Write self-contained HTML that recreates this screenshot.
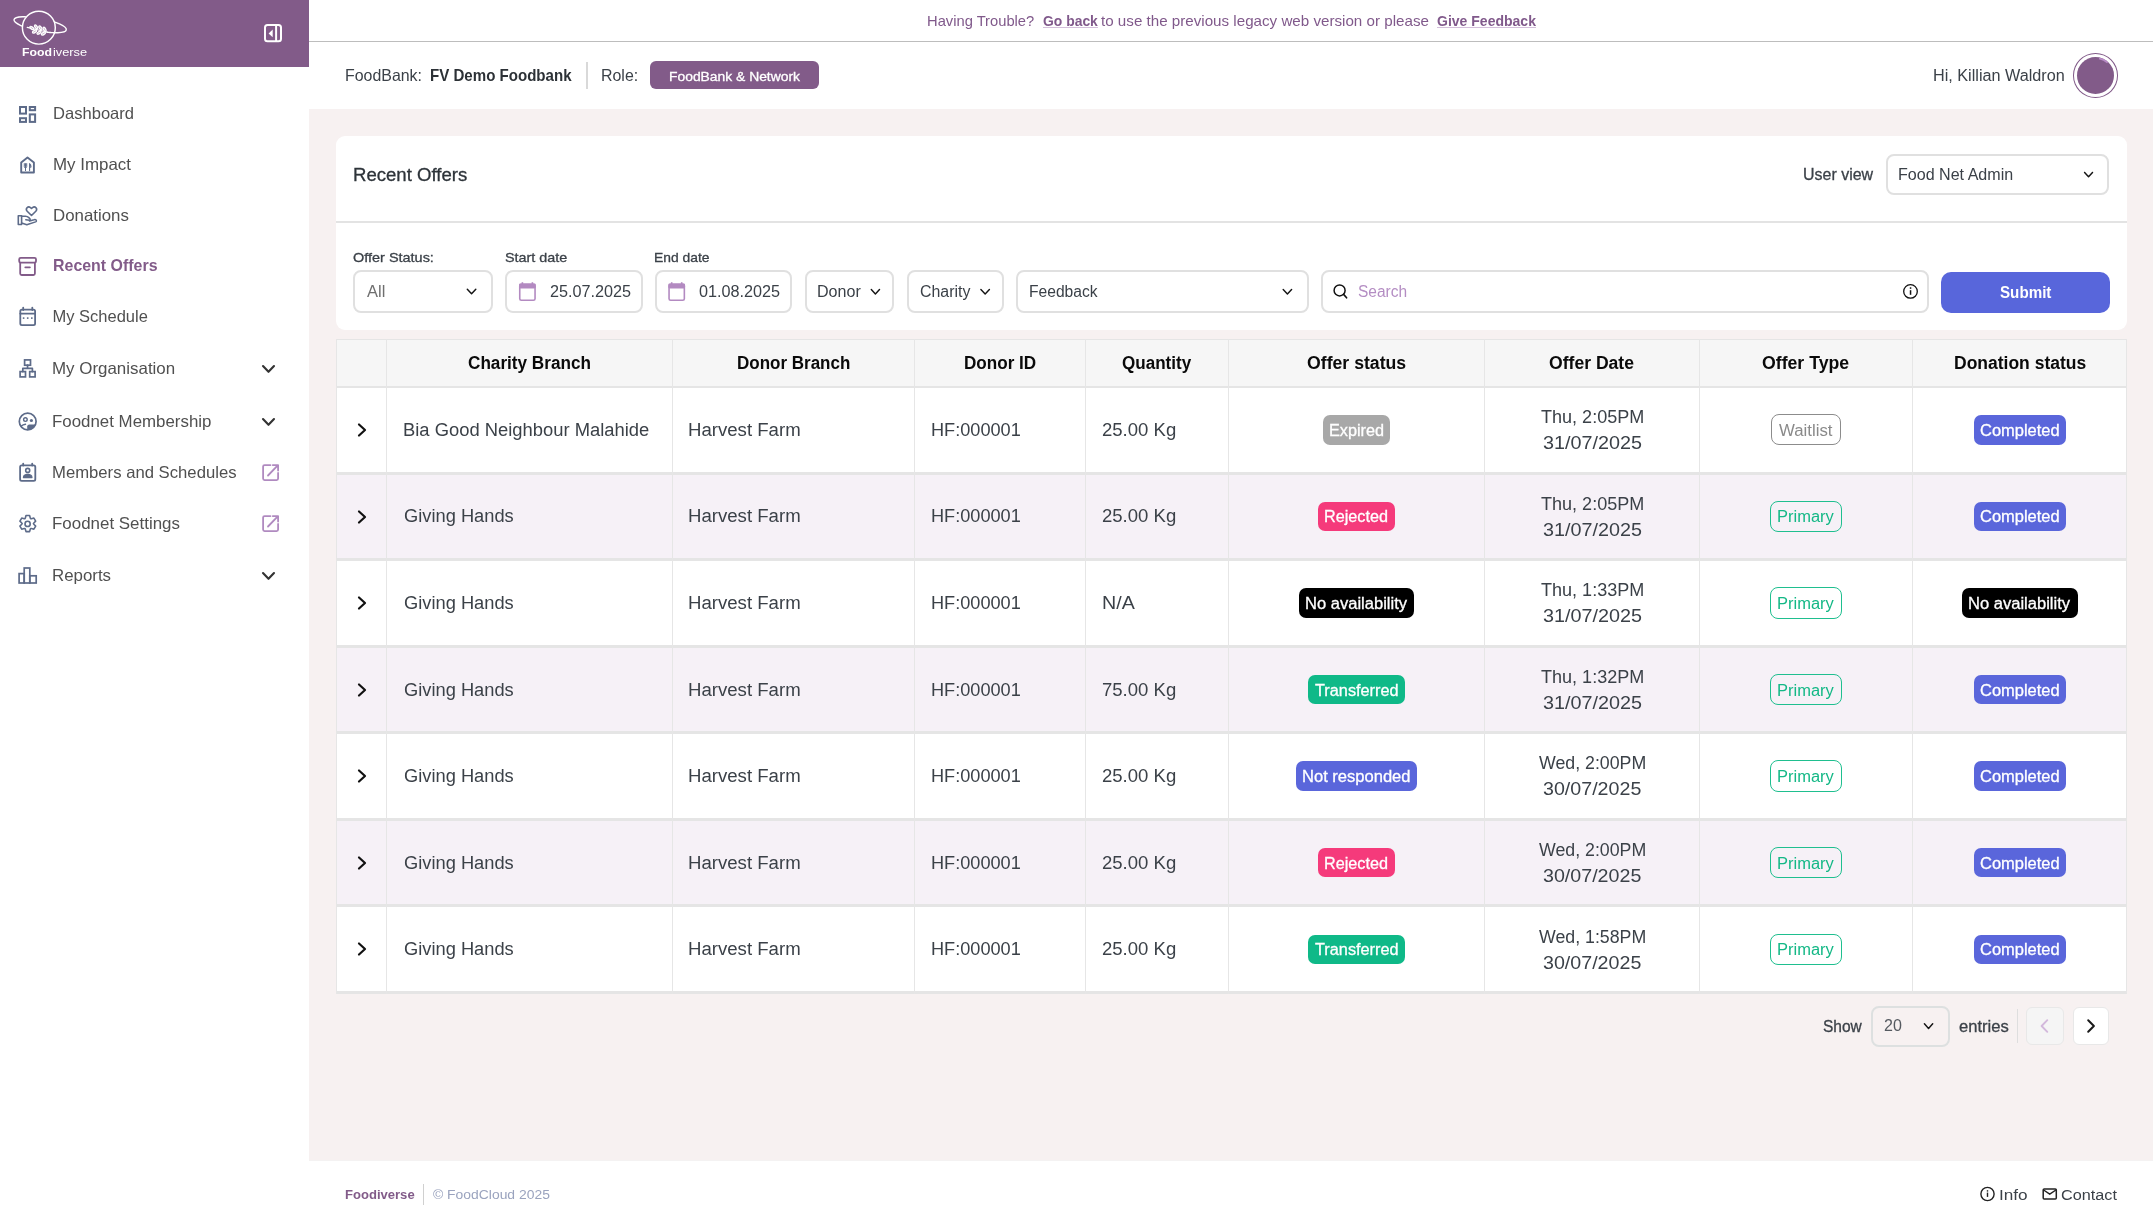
<!DOCTYPE html>
<html><head><meta charset="utf-8"><title>Recent Offers</title>
<style>
html,body{margin:0;padding:0;width:2153px;height:1226px;overflow:hidden;background:#fff;}
body{position:relative;font-family:"Liberation Sans",sans-serif;}
.b{position:absolute;}
.i{position:absolute;overflow:visible;}
.tl{position:absolute;left:0;top:0;width:2153px;height:1226px;will-change:transform;}
.t{position:absolute;white-space:nowrap;line-height:1;transform-origin:0 0;}
</style></head><body>
<div class="b" style="left:309px;top:109px;width:1844px;height:1051px;background:#f7f1f1;"></div>
<div class="b" style="left:309px;top:41px;width:1844px;height:1px;background:#bdbdbd;"></div>
<div class="b" style="left:0px;top:0px;width:309px;height:67.4px;background:#825b89;"></div>
<div class="b" style="left:1043px;top:26.5px;width:55px;height:1px;background:#d4bfdb;"></div>
<div class="b" style="left:1437px;top:26.5px;width:99px;height:1px;background:#d4bfdb;"></div>
<div class="b" style="left:586px;top:62px;width:2px;height:27px;background:#d9d9d9;"></div>
<div class="b" style="left:650.3px;top:61.4px;width:168.8px;height:28px;background:#825b89;border-radius:6px;"></div>
<div class="b" style="left:2073.2px;top:53.1px;width:44.8px;height:44.6px;border:1.2px solid #825b89;border-radius:50%;box-sizing:border-box;"></div>
<div class="b" style="left:2076.6px;top:56.5px;width:37.7px;height:37.5px;background:#825b89;border-radius:50%;"></div>
<svg class="i" style="left:2060px;top:40px" width="70" height="70" viewBox="2060 40 70 70" fill="none"><path d="M2099.0 58.3 A17.4 17.4 0 0 1 2107.6 62.6" stroke="#b88ac6" stroke-width="1.7"/></svg>
<div class="b" style="left:336px;top:136px;width:1791px;height:194px;background:#fff;border-radius:9px;"></div>
<div class="b" style="left:336px;top:221px;width:1791px;height:2px;background:#e3e3e3;"></div>
<div class="b" style="left:1885.7px;top:153.8px;width:223.5px;height:40.9px;border:2px solid #e0e0e0;border-radius:8px;box-sizing:border-box;background:#fff;"></div>
<div class="b" style="left:353.3px;top:270.2px;width:139.7px;height:42.5px;border:2px solid #e0e0e0;border-radius:8px;box-sizing:border-box;background:#fff;"></div>
<div class="b" style="left:505.2px;top:270.2px;width:137.5px;height:42.5px;border:2px solid #e0e0e0;border-radius:8px;box-sizing:border-box;background:#fff;"></div>
<div class="b" style="left:654.8px;top:270.2px;width:137.5px;height:42.5px;border:2px solid #e0e0e0;border-radius:8px;box-sizing:border-box;background:#fff;"></div>
<div class="b" style="left:804.5px;top:270.2px;width:89.9px;height:42.5px;border:2px solid #e0e0e0;border-radius:8px;box-sizing:border-box;background:#fff;"></div>
<div class="b" style="left:906.7px;top:270.2px;width:97.3px;height:42.5px;border:2px solid #e0e0e0;border-radius:8px;box-sizing:border-box;background:#fff;"></div>
<div class="b" style="left:1016.3px;top:270.2px;width:292.3px;height:42.5px;border:2px solid #e0e0e0;border-radius:8px;box-sizing:border-box;background:#fff;"></div>
<div class="b" style="left:1321.2px;top:270.2px;width:608.3px;height:42.5px;border:2px solid #e0e0e0;border-radius:8px;box-sizing:border-box;background:#fff;"></div>
<div class="b" style="left:1941.2px;top:272.3px;width:168.6px;height:40.6px;background:#5866db;border-radius:10px;"></div>
<div class="b" style="left:336px;top:339px;width:1791px;height:655px;background:#fff;"></div>
<div class="b" style="left:336px;top:339px;width:1791px;height:49px;background:#f6f6f6;"></div>
<div class="b" style="left:336px;top:471.57px;width:1791px;height:3px;background:#e5e5e5;"></div>
<div class="b" style="left:336px;top:474.57px;width:1791px;height:86.57px;background:#f6f1f7;"></div>
<div class="b" style="left:336px;top:558.14px;width:1791px;height:3px;background:#e5e5e5;"></div>
<div class="b" style="left:336px;top:644.71px;width:1791px;height:3px;background:#e5e5e5;"></div>
<div class="b" style="left:336px;top:647.71px;width:1791px;height:86.57px;background:#f6f1f7;"></div>
<div class="b" style="left:336px;top:731.29px;width:1791px;height:3px;background:#e5e5e5;"></div>
<div class="b" style="left:336px;top:817.86px;width:1791px;height:3px;background:#e5e5e5;"></div>
<div class="b" style="left:336px;top:820.86px;width:1791px;height:86.57px;background:#f6f1f7;"></div>
<div class="b" style="left:336px;top:904.43px;width:1791px;height:3px;background:#e5e5e5;"></div>
<div class="b" style="left:336px;top:991px;width:1791px;height:3px;background:#e5e5e5;"></div>
<div class="b" style="left:336px;top:386px;width:1791px;height:2px;background:#e5e5e5;"></div>
<div class="b" style="left:336px;top:339px;width:1791px;height:1px;background:#e5e5e5;"></div>
<div class="b" style="left:336px;top:339px;width:1px;height:655px;background:#e6e6e6;"></div>
<div class="b" style="left:386px;top:339px;width:1px;height:655px;background:#e6e6e6;"></div>
<div class="b" style="left:671.5px;top:339px;width:1px;height:655px;background:#e6e6e6;"></div>
<div class="b" style="left:913.9px;top:339px;width:1px;height:655px;background:#e6e6e6;"></div>
<div class="b" style="left:1084.8px;top:339px;width:1px;height:655px;background:#e6e6e6;"></div>
<div class="b" style="left:1228.1px;top:339px;width:1px;height:655px;background:#e6e6e6;"></div>
<div class="b" style="left:1484.4px;top:339px;width:1px;height:655px;background:#e6e6e6;"></div>
<div class="b" style="left:1698.7px;top:339px;width:1px;height:655px;background:#e6e6e6;"></div>
<div class="b" style="left:1912.3px;top:339px;width:1px;height:655px;background:#e6e6e6;"></div>
<div class="b" style="left:2126px;top:339px;width:1px;height:655px;background:#e6e6e6;"></div>
<div class="b" style="left:1323px;top:415.2px;width:67px;height:29.4px;background:#a8a8a8;border-radius:7px;"></div>
<div class="b" style="left:1771.1px;top:414.2px;width:69.9px;height:31.2px;border:1.5px solid #8c8c8c;border-radius:8px;box-sizing:border-box;"></div>
<div class="b" style="left:1974px;top:415.2px;width:92px;height:29.4px;background:#5a66db;border-radius:7px;"></div>
<svg class="i" style="left:355px;top:422.0px;" width="14" height="16" viewBox="0 0 14 16" fill="none"><path d="M4 2.5 L10 8 L4 13.5" stroke="#111" stroke-width="2.2" stroke-linecap="round" stroke-linejoin="round"/></svg>
<div class="b" style="left:1318.4px;top:501.77px;width:76.6px;height:29.4px;background:#f53a7b;border-radius:7px;"></div>
<div class="b" style="left:1770px;top:500.77px;width:72px;height:31.2px;border:1.5px solid #1fbf8f;border-radius:8px;box-sizing:border-box;"></div>
<div class="b" style="left:1974px;top:501.77px;width:92px;height:29.4px;background:#5a66db;border-radius:7px;"></div>
<svg class="i" style="left:355px;top:508.57142857142856px;" width="14" height="16" viewBox="0 0 14 16" fill="none"><path d="M4 2.5 L10 8 L4 13.5" stroke="#111" stroke-width="2.2" stroke-linecap="round" stroke-linejoin="round"/></svg>
<div class="b" style="left:1299px;top:588.34px;width:115.3px;height:29.4px;background:#000000;border-radius:7px;"></div>
<div class="b" style="left:1770px;top:587.34px;width:72px;height:31.2px;border:1.5px solid #1fbf8f;border-radius:8px;box-sizing:border-box;"></div>
<div class="b" style="left:1962.3px;top:588.34px;width:115.3px;height:29.4px;background:#000;border-radius:7px;"></div>
<svg class="i" style="left:355px;top:595.1428571428571px;" width="14" height="16" viewBox="0 0 14 16" fill="none"><path d="M4 2.5 L10 8 L4 13.5" stroke="#111" stroke-width="2.2" stroke-linecap="round" stroke-linejoin="round"/></svg>
<div class="b" style="left:1308px;top:674.91px;width:97.4px;height:29.4px;background:#0fb988;border-radius:7px;"></div>
<div class="b" style="left:1770px;top:673.91px;width:72px;height:31.2px;border:1.5px solid #1fbf8f;border-radius:8px;box-sizing:border-box;"></div>
<div class="b" style="left:1974px;top:674.91px;width:92px;height:29.4px;background:#5a66db;border-radius:7px;"></div>
<svg class="i" style="left:355px;top:681.7142857142858px;" width="14" height="16" viewBox="0 0 14 16" fill="none"><path d="M4 2.5 L10 8 L4 13.5" stroke="#111" stroke-width="2.2" stroke-linecap="round" stroke-linejoin="round"/></svg>
<div class="b" style="left:1296.2px;top:761.49px;width:120.8px;height:29.4px;background:#5a66db;border-radius:7px;"></div>
<div class="b" style="left:1770px;top:760.49px;width:72px;height:31.2px;border:1.5px solid #1fbf8f;border-radius:8px;box-sizing:border-box;"></div>
<div class="b" style="left:1974px;top:761.49px;width:92px;height:29.4px;background:#5a66db;border-radius:7px;"></div>
<svg class="i" style="left:355px;top:768.2857142857142px;" width="14" height="16" viewBox="0 0 14 16" fill="none"><path d="M4 2.5 L10 8 L4 13.5" stroke="#111" stroke-width="2.2" stroke-linecap="round" stroke-linejoin="round"/></svg>
<div class="b" style="left:1318.4px;top:848.06px;width:76.6px;height:29.4px;background:#f53a7b;border-radius:7px;"></div>
<div class="b" style="left:1770px;top:847.06px;width:72px;height:31.2px;border:1.5px solid #1fbf8f;border-radius:8px;box-sizing:border-box;"></div>
<div class="b" style="left:1974px;top:848.06px;width:92px;height:29.4px;background:#5a66db;border-radius:7px;"></div>
<svg class="i" style="left:355px;top:854.8571428571429px;" width="14" height="16" viewBox="0 0 14 16" fill="none"><path d="M4 2.5 L10 8 L4 13.5" stroke="#111" stroke-width="2.2" stroke-linecap="round" stroke-linejoin="round"/></svg>
<div class="b" style="left:1308px;top:934.63px;width:97.4px;height:29.4px;background:#0fb988;border-radius:7px;"></div>
<div class="b" style="left:1770px;top:933.63px;width:72px;height:31.2px;border:1.5px solid #1fbf8f;border-radius:8px;box-sizing:border-box;"></div>
<div class="b" style="left:1974px;top:934.63px;width:92px;height:29.4px;background:#5a66db;border-radius:7px;"></div>
<svg class="i" style="left:355px;top:941.4285714285714px;" width="14" height="16" viewBox="0 0 14 16" fill="none"><path d="M4 2.5 L10 8 L4 13.5" stroke="#111" stroke-width="2.2" stroke-linecap="round" stroke-linejoin="round"/></svg>
<div class="b" style="left:1871.4px;top:1005.7px;width:78.2px;height:41px;border:2px solid #dde0e0;border-radius:8px;box-sizing:border-box;"></div>
<div class="b" style="left:2017px;top:1009px;width:1px;height:34px;background:#dedede;"></div>
<div class="b" style="left:2026px;top:1007.4px;width:37.6px;height:37.2px;background:#f5f5f5;border:1px solid #e8e8e8;border-radius:6px;box-sizing:border-box;"></div>
<div class="b" style="left:2072.5px;top:1007.4px;width:36.8px;height:37.2px;background:#fff;border:1px solid #e8e8e8;border-radius:6px;box-sizing:border-box;"></div>
<div class="b" style="left:423px;top:1184px;width:1px;height:20.5px;background:#d0d0d0;"></div>
<div class="b" style="left:309px;top:1160px;width:1844px;height:1px;background:#f4f2f2;"></div>
<svg class="i" style="left:0;top:0" width="309" height="620" viewBox="0 0 309 620" fill="none"><rect x="20" y="107" width="6" height="6.6" rx="0" stroke="#5d6b89" stroke-width="2"/><rect x="29.8" y="107" width="5.3" height="3.2" rx="0" stroke="#5d6b89" stroke-width="2"/><rect x="20" y="118.2" width="6" height="3.7" rx="0" stroke="#5d6b89" stroke-width="2"/><rect x="29.8" y="114.4" width="5.3" height="7.5" rx="0" stroke="#5d6b89" stroke-width="2"/><path d="M21.2 172.5 V162.5 L27.5 157.6 L33.9 162.5 V172.5 Z" stroke="#5d6b89" stroke-width="1.9" fill="none" stroke-linecap="round" stroke-linejoin="round" /><path d="M24.3 163.6 V166.6 Q24.3 167.8 25.5 167.8 Q26.7 167.8 26.7 166.6 V163.6 M25.5 163.6 V170.6" stroke="#5d6b89" stroke-width="1.0" fill="none" stroke-linecap="round" stroke-linejoin="round" /><path d="M29.6 170.6 V163.6 Q31.0 164.6 31.0 167.0 L29.6 167.4" stroke="#5d6b89" stroke-width="1.1" fill="none" stroke-linecap="round" stroke-linejoin="round" /><path d="M31.5 215.5 L27.2 211.3 Q25.6 209.5 27 207.8 Q28.6 206.2 30.5 207.6 L31.5 208.5 L32.5 207.6 Q34.4 206.2 36 207.8 Q37.4 209.5 35.8 211.3 Z" stroke="#5d6b89" stroke-width="1.6" fill="none" stroke-linecap="round" stroke-linejoin="round" /><path d="M18.3 215.8 H21.6 V224.5 H18.3 Z" stroke="#5d6b89" stroke-width="1.6" fill="none" stroke-linecap="round" stroke-linejoin="round" /><path d="M21.6 216.3 H25.5 Q27.5 216.3 28.8 217.6 L30 218.8 Q30.6 219.8 29.5 220.2 L25.8 219.8" stroke="#5d6b89" stroke-width="1.5" fill="none" stroke-linecap="round" stroke-linejoin="round" /><path d="M21.6 223 L26.8 224.8 L35.6 221.9 Q37 221.2 36 219.9 Q35.2 219.3 34 219.8 L29.5 221" stroke="#5d6b89" stroke-width="1.5" fill="none" stroke-linecap="round" stroke-linejoin="round" /><rect x="19.2" y="257.8" width="16.8" height="4.9" rx="1.5" stroke="#825b89" stroke-width="1.8"/><path d="M20.2 262.7 V273.5 Q20.2 275 21.7 275 H33.4 Q34.9 275 34.9 273.5 V262.7" stroke="#825b89" stroke-width="1.8" fill="none" stroke-linecap="round" stroke-linejoin="round" /><path d="M25.3 267.3 H29.9" stroke="#825b89" stroke-width="1.8" fill="none" stroke-linecap="round" stroke-linejoin="round" /><rect x="20.3" y="309.6" width="14.8" height="15.6" rx="1.6" stroke="#5d6b89" stroke-width="1.8"/><path d="M20.3 313.6 H35.1" stroke="#5d6b89" stroke-width="1.8" fill="none" stroke-linecap="round" stroke-linejoin="round" /><path d="M23.2 307.6 V310 M32.3 307.6 V310" stroke="#5d6b89" stroke-width="1.8" fill="none" stroke-linecap="round" stroke-linejoin="round" /><rect x="22.8" y="317.3" width="1.6" height="1.6" fill="#5d6b89"/><rect x="26.9" y="317.3" width="1.6" height="1.6" fill="#5d6b89"/><rect x="31.0" y="317.3" width="1.6" height="1.6" fill="#5d6b89"/><rect x="24.6" y="359.9" width="5.9" height="5.3" rx="0" stroke="#5d6b89" stroke-width="1.7"/><rect x="20.1" y="371.6" width="5.4" height="5.3" rx="0" stroke="#5d6b89" stroke-width="1.7"/><rect x="29.7" y="371.6" width="5.4" height="5.3" rx="0" stroke="#5d6b89" stroke-width="1.7"/><path d="M27.55 365.2 V368.4 M22.8 371.6 V368.4 H32.4 V371.6" stroke="#5d6b89" stroke-width="1.7" fill="none" stroke-linecap="round" stroke-linejoin="round" /><clipPath id="fc"><circle cx="27.7" cy="421.5" r="8.4"/></clipPath><path d="M27.2 431 V426.4 Q27.2 424.4 29.4 424.4 H37 V431 Z" fill="#5d6b89" clip-path="url(#fc)"/><circle cx="27.7" cy="421.5" r="8.4" stroke="#5d6b89" stroke-width="1.7"/><circle cx="25.4" cy="419.6" r="1.8" stroke="#5d6b89" stroke-width="1.4"/><circle cx="31.4" cy="420.5" r="1.6" fill="#5d6b89"/><path d="M21 426.2 Q23 424.6 25.5 424.3" stroke="#5d6b89" stroke-width="1.4" fill="none" stroke-linecap="round" stroke-linejoin="round" /><rect x="20.1" y="465.3" width="15.2" height="15.5" rx="1.6" stroke="#5d6b89" stroke-width="1.8"/><path d="M23.2 463.6 V465.6 M32.2 463.6 V465.6" stroke="#5d6b89" stroke-width="1.8" fill="none" stroke-linecap="round" stroke-linejoin="round" /><circle cx="27.7" cy="470.4" r="2" stroke="#5d6b89" stroke-width="1.6"/><path d="M23.4 477.6 Q23.6 474.4 27.7 474.4 Q31.8 474.4 32 477.6 Z" stroke="#5d6b89" stroke-width="1.2" fill="#5d6b89" stroke-linecap="round" stroke-linejoin="round" /><path d="M26.01 515.55 L29.59 515.55 L30.28 518.03 L30.60 518.75 L31.39 518.66 L33.88 518.03 L35.67 521.12 L33.87 522.96 L33.40 523.60 L33.87 524.24 L35.67 526.08 L33.88 529.17 L31.39 528.54 L30.60 528.45 L30.28 529.17 L29.59 531.65 L26.01 531.65 L25.32 529.17 L25.00 528.45 L24.21 528.54 L21.72 529.17 L19.93 526.08 L21.73 524.24 L22.20 523.60 L21.73 522.96 L19.93 521.12 L21.72 518.03 L24.21 518.66 L25.00 518.75 L25.32 518.03 Z" stroke="#5d6b89" stroke-width="1.6" fill="none" stroke-linecap="round" stroke-linejoin="round" /><circle cx="27.6" cy="523.9" r="2.6" stroke="#5d6b89" stroke-width="1.6"/><rect x="19.1" y="573.6" width="5.1" height="9.4" rx="0" stroke="#5d6b89" stroke-width="1.7"/><rect x="24.2" y="568" width="5.6" height="15" rx="0" stroke="#5d6b89" stroke-width="1.7"/><rect x="29.8" y="575.8" width="6.4" height="7.2" rx="0" stroke="#5d6b89" stroke-width="1.7"/><path d="M263 366 L268.5 371.8 L274 366" stroke="#333" stroke-width="2.1" fill="none" stroke-linecap="round" stroke-linejoin="round" /><path d="M263 419 L268.5 424.8 L274 419" stroke="#333" stroke-width="2.1" fill="none" stroke-linecap="round" stroke-linejoin="round" /><path d="M263 573 L268.5 578.8 L274 573" stroke="#333" stroke-width="2.1" fill="none" stroke-linecap="round" stroke-linejoin="round" /><path d="M270.5 465.1 H264.6 Q263.1 465.1 263.1 466.6 V478.6 Q263.1 480.1 264.6 480.1 H276.6 Q278.1 480.1 278.1 478.6 V472.90000000000003" stroke="#b08ac0" stroke-width="1.8" fill="none" stroke-linecap="round" stroke-linejoin="round" stroke-linecap="butt"/><path d="M268 475.5 L278 465.2 M272.8 465.1 H278.1 V470.6" stroke="#b08ac0" stroke-width="1.8" fill="none" stroke-linecap="round" stroke-linejoin="round" stroke-linecap="butt" stroke-linejoin="miter"/><path d="M270.5 516.0999999999999 H264.6 Q263.1 516.0999999999999 263.1 517.5999999999999 V529.5999999999999 Q263.1 531.0999999999999 264.6 531.0999999999999 H276.6 Q278.1 531.0999999999999 278.1 529.5999999999999 V523.9" stroke="#b08ac0" stroke-width="1.8" fill="none" stroke-linecap="round" stroke-linejoin="round" stroke-linecap="butt"/><path d="M268 526.5 L278 516.1999999999999 M272.8 516.0999999999999 H278.1 V521.5999999999999" stroke="#b08ac0" stroke-width="1.8" fill="none" stroke-linecap="round" stroke-linejoin="round" stroke-linecap="butt" stroke-linejoin="miter"/></svg>
<svg class="i" style="left:0;top:0" width="309" height="67" viewBox="0 0 309 67" fill="none"><defs><mask id="m1" maskUnits="userSpaceOnUse" x="0" y="0" width="100" height="67"><rect x="0" y="0" width="100" height="67" fill="#fff"/><circle cx="38.85" cy="27.65" r="16.4" fill="#000"/></mask></defs><ellipse cx="40.15" cy="24.75" rx="26.6" ry="6.3" transform="rotate(10.9 40.15 24.75)" stroke="#fff" stroke-width="1.4" mask="url(#m1)"/><circle cx="38.85" cy="27.65" r="16.45" stroke="#fff" stroke-width="1.45"/><path d="M46.37 32.10 L47.23 32.20 L48.08 32.30 L48.93 32.38 L49.76 32.45 L50.58 32.52 L51.39 32.58 L52.18 32.62 L52.97 32.66 L53.73 32.69 L54.8 32.72" stroke="#fff" stroke-width="1.4"/><path d="M27.2 27.3 L47 32" stroke="#fff" stroke-width="1.2" stroke-linecap="round"/><ellipse cx="31.8" cy="28.0" rx="2.9" ry="1.75" transform="rotate(35 31.8 28.0)" fill="#fff"/><path d="M30.90 27.37 L32.70 28.63" stroke="#825b89" stroke-width="0.4" stroke-linecap="round"/><ellipse cx="36.1" cy="26.9" rx="2.9" ry="1.75" transform="rotate(58 36.1 26.9)" fill="#fff"/><path d="M35.52 25.97 L36.68 27.83" stroke="#825b89" stroke-width="0.4" stroke-linecap="round"/><ellipse cx="40.4" cy="27.9" rx="2.9" ry="1.75" transform="rotate(58 40.4 27.9)" fill="#fff"/><path d="M39.82 26.97 L40.98 28.83" stroke="#825b89" stroke-width="0.4" stroke-linecap="round"/><ellipse cx="44.6" cy="29.3" rx="2.9" ry="1.75" transform="rotate(62 44.6 29.3)" fill="#fff"/><path d="M44.08 28.33 L45.12 30.27" stroke="#825b89" stroke-width="0.4" stroke-linecap="round"/><ellipse cx="34.5" cy="31.6" rx="2.9" ry="1.75" transform="rotate(-28 34.5 31.6)" fill="#fff"/><path d="M33.53 32.12 L35.47 31.08" stroke="#825b89" stroke-width="0.4" stroke-linecap="round"/><ellipse cx="39.0" cy="32.7" rx="2.9" ry="1.75" transform="rotate(-28 39.0 32.7)" fill="#fff"/><path d="M38.03 33.22 L39.97 32.18" stroke="#825b89" stroke-width="0.4" stroke-linecap="round"/><ellipse cx="43.4" cy="33.6" rx="2.9" ry="1.75" transform="rotate(-28 43.4 33.6)" fill="#fff"/><path d="M42.43 34.12 L44.37 33.08" stroke="#825b89" stroke-width="0.4" stroke-linecap="round"/><rect x="265" y="25" width="16" height="16.2" rx="2.5" stroke="#fff" stroke-width="2"/><path d="M276.1 25 V41.2" stroke="#fff" stroke-width="2"/><path d="M268.6 33.4 L272.7 29.6 V37.2 Z" fill="#fff"/></svg>
<svg class="i" style="left:0;top:0" width="2153" height="1226" viewBox="0 0 2153 1226" fill="none"><path d="M2084.6 172.4 L2088.55 176.8 L2092.5 172.4" stroke="#141414" stroke-width="1.45" fill="none" stroke-linecap="round" stroke-linejoin="round" /><path d="M467.3 289.20000000000005 L471.54999999999995 293.7 L475.79999999999995 289.20000000000005" stroke="#141414" stroke-width="1.45" fill="none" stroke-linecap="round" stroke-linejoin="round" /><path d="M871.3000000000001 289.6 L875.4000000000001 293.9 L879.5 289.6" stroke="#141414" stroke-width="1.45" fill="none" stroke-linecap="round" stroke-linejoin="round" /><path d="M980.9 289.6 L985.15 293.9 L989.4 289.6" stroke="#141414" stroke-width="1.45" fill="none" stroke-linecap="round" stroke-linejoin="round" /><path d="M1283.1999999999998 289.6 L1287.4 293.9 L1291.6000000000001 289.6" stroke="#141414" stroke-width="1.45" fill="none" stroke-linecap="round" stroke-linejoin="round" /><path d="M1924.3999999999999 1023.7 L1928.55 1028.4 L1932.7 1023.7" stroke="#141414" stroke-width="1.45" fill="none" stroke-linecap="round" stroke-linejoin="round" /><rect x="519.75" y="284.4" width="15.3" height="15.9" rx="1.6" stroke="#b38ac1" stroke-width="1.6"/><rect x="519" y="283.6" width="16.8" height="4.8" rx="1.4" fill="#b38ac1"/><rect x="521.6" y="282.2" width="1.6" height="2.5" fill="#b38ac1"/><rect x="531.6" y="282.2" width="1.6" height="2.5" fill="#b38ac1"/><rect x="669.05" y="284.4" width="15.3" height="15.9" rx="1.6" stroke="#b38ac1" stroke-width="1.6"/><rect x="668.3" y="283.6" width="16.8" height="4.8" rx="1.4" fill="#b38ac1"/><rect x="670.9" y="282.2" width="1.6" height="2.5" fill="#b38ac1"/><rect x="680.9" y="282.2" width="1.6" height="2.5" fill="#b38ac1"/><circle cx="1339.6" cy="290.4" r="5.5" stroke="#111" stroke-width="1.5"/><path d="M1343.6 294.4 L1346.6 297.8" stroke="#111" stroke-width="1.6" fill="none" stroke-linecap="round" stroke-linejoin="round" /><circle cx="1910.5" cy="291.4" r="6.8" stroke="#111" stroke-width="1.3"/><rect x="1909.8" y="290.2" width="1.5" height="4.6" fill="#111"/><rect x="1909.8" y="287.3" width="1.5" height="1.5" fill="#111"/><path d="M2047.3 1020.2 L2041.6 1026 L2047.3 1031.8" stroke="#d3b9dc" stroke-width="1.9" fill="none" stroke-linecap="round" stroke-linejoin="round" /><path d="M2088.2 1020.2 L2093.9 1026 L2088.2 1031.8" stroke="#1a1a1a" stroke-width="2.0" fill="none" stroke-linecap="round" stroke-linejoin="round" /><circle cx="1987.5" cy="1194" r="6.6" stroke="#222" stroke-width="1.4"/><rect x="1986.8" y="1192.6" width="1.4" height="4.3" fill="#222"/><rect x="1986.8" y="1190.2" width="1.4" height="1.4" fill="#222"/><rect x="2043.2" y="1189" width="13.1" height="10" rx="1" stroke="#222" stroke-width="1.5"/><path d="M2043.6 1190 L2049.75 1194.2 L2055.9 1190" stroke="#222" stroke-width="1.4" fill="none" stroke-linecap="round" stroke-linejoin="round" /></svg>
<div class="tl">
<span class="t" style="left:926.85px;top:14.00px;font-size:14.5px;color:#80598b;transform:scaleX(1.0157);">Having Trouble?</span>
<span class="t" style="left:1043.07px;top:14.00px;font-size:14.5px;color:#80598b;transform:scaleX(0.9586);font-weight:700;">Go back</span>
<span class="t" style="left:1100.70px;top:14.00px;font-size:14.5px;color:#80598b;transform:scaleX(1.0458);">to use the previous legacy web version or please</span>
<span class="t" style="left:1436.96px;top:14.00px;font-size:14.5px;color:#80598b;transform:scaleX(0.9667);font-weight:700;">Give Feedback</span>
<span class="t" style="left:344.76px;top:67.00px;font-size:16.5px;color:#3b4148;transform:scaleX(0.9647);">FoodBank:</span>
<span class="t" style="left:430.26px;top:67.00px;font-size:16.5px;color:#2c3136;transform:scaleX(0.9137);font-weight:700;">FV Demo Foodbank</span>
<span class="t" style="left:601.46px;top:67.00px;font-size:16.5px;color:#3b4148;transform:scaleX(0.9653);">Role:</span>
<span class="t" style="left:668.72px;top:71.00px;font-size:12.5px;color:#ffffff;transform:scaleX(1.1089);-webkit-text-stroke:0.3px #ffffff;">FoodBank &amp; Network</span>
<span class="t" style="left:1933.48px;top:68.00px;font-size:16.0px;color:#3b4148;transform:scaleX(1.0124);">Hi, Killian Waldron</span>
<span class="t" style="left:22.43px;top:47.00px;font-size:11.5px;color:#ffffff;transform:scaleX(1.0659);font-weight:700;">Food</span>
<span class="t" style="left:52.80px;top:47.00px;font-size:11.5px;color:#ffffff;transform:scaleX(1.1122);">iverse</span>
<span class="t" style="left:52.51px;top:105.00px;font-size:16.5px;color:#505050;transform:scaleX(1.0038);">Dashboard</span>
<span class="t" style="left:52.68px;top:156.00px;font-size:16.5px;color:#505050;transform:scaleX(1.0245);">My Impact</span>
<span class="t" style="left:52.68px;top:207.00px;font-size:16.5px;color:#505050;transform:scaleX(1.0208);">Donations</span>
<span class="t" style="left:52.51px;top:308.00px;font-size:16.5px;color:#505050;">My Schedule</span>
<span class="t" style="left:52.28px;top:360.00px;font-size:16.5px;color:#505050;transform:scaleX(1.0253);">My Organisation</span>
<span class="t" style="left:52.28px;top:413.00px;font-size:16.5px;color:#505050;transform:scaleX(1.0224);">Foodnet Membership</span>
<span class="t" style="left:52.30px;top:464.00px;font-size:16.5px;color:#505050;transform:scaleX(1.0110);">Members and Schedules</span>
<span class="t" style="left:52.28px;top:515.00px;font-size:16.5px;color:#505050;transform:scaleX(1.0257);">Foodnet Settings</span>
<span class="t" style="left:52.28px;top:567.00px;font-size:16.5px;color:#505050;transform:scaleX(1.0220);">Reports</span>
<span class="t" style="left:52.60px;top:257.00px;font-size:16.5px;color:#825b89;transform:scaleX(0.9662);font-weight:700;">Recent Offers</span>
<span class="t" style="left:352.65px;top:166.00px;font-size:18.0px;color:#2d3339;transform:scaleX(1.0318);-webkit-text-stroke:0.3px #2d3339;">Recent Offers</span>
<span class="t" style="left:1802.90px;top:166.00px;font-size:16.5px;color:#3b4148;transform:scaleX(0.9679);-webkit-text-stroke:0.3px #3b4148;">User view</span>
<span class="t" style="left:1898.25px;top:167.00px;font-size:16.0px;color:#3b4148;transform:scaleX(1.0039);">Food Net Admin</span>
<span class="t" style="left:352.92px;top:251.00px;font-size:13.5px;color:#3b4148;transform:scaleX(1.0708);-webkit-text-stroke:0.3px #3b4148;">Offer Status:</span>
<span class="t" style="left:505.15px;top:251.00px;font-size:13.5px;color:#3b4148;transform:scaleX(1.0631);-webkit-text-stroke:0.3px #3b4148;">Start date</span>
<span class="t" style="left:654.02px;top:251.00px;font-size:13.5px;color:#3b4148;transform:scaleX(1.0278);-webkit-text-stroke:0.3px #3b4148;">End date</span>
<span class="t" style="left:367.00px;top:284.00px;font-size:16.0px;color:#6f6f6f;transform:scaleX(1.0283);">All</span>
<span class="t" style="left:549.64px;top:284.00px;font-size:16.0px;color:#3b4148;transform:scaleX(1.0130);">25.07.2025</span>
<span class="t" style="left:699.29px;top:284.00px;font-size:16.0px;color:#3b4148;transform:scaleX(1.0123);">01.08.2025</span>
<span class="t" style="left:817.25px;top:284.00px;font-size:16.0px;color:#3b4148;transform:scaleX(1.0036);">Donor</span>
<span class="t" style="left:919.95px;top:284.00px;font-size:16.0px;color:#3b4148;transform:scaleX(0.9934);">Charity</span>
<span class="t" style="left:1029.08px;top:284.00px;font-size:16.0px;color:#3b4148;transform:scaleX(0.9760);">Feedback</span>
<span class="t" style="left:1357.72px;top:284.00px;font-size:16.0px;color:#b48dc3;transform:scaleX(0.9696);">Search</span>
<span class="t" style="left:2000.06px;top:285.00px;font-size:16.0px;color:#ffffff;transform:scaleX(0.9482);font-weight:700;">Submit</span>
<span class="t" style="left:467.56px;top:354.00px;font-size:18.0px;color:#0a0a0a;transform:scaleX(0.9530);font-weight:700;">Charity Branch</span>
<span class="t" style="left:736.54px;top:354.00px;font-size:18.0px;color:#0a0a0a;transform:scaleX(0.9440);font-weight:700;">Donor Branch</span>
<span class="t" style="left:963.63px;top:354.00px;font-size:18.0px;color:#0a0a0a;transform:scaleX(0.9496);font-weight:700;">Donor ID</span>
<span class="t" style="left:1121.87px;top:354.00px;font-size:18.0px;color:#0a0a0a;transform:scaleX(0.9469);font-weight:700;">Quantity</span>
<span class="t" style="left:1307.05px;top:354.00px;font-size:18.0px;color:#0a0a0a;transform:scaleX(0.9817);font-weight:700;">Offer status</span>
<span class="t" style="left:1549.45px;top:354.00px;font-size:18.0px;color:#0a0a0a;transform:scaleX(0.9766);font-weight:700;">Offer Date</span>
<span class="t" style="left:1762.35px;top:354.00px;font-size:18.0px;color:#0a0a0a;transform:scaleX(0.9821);font-weight:700;">Offer Type</span>
<span class="t" style="left:1953.71px;top:354.00px;font-size:18.0px;color:#0a0a0a;transform:scaleX(0.9721);font-weight:700;">Donation status</span>
<span class="t" style="left:403.26px;top:421.00px;font-size:18.0px;color:#3b4148;transform:scaleX(1.0213);">Bia Good Neighbour Malahide</span>
<span class="t" style="left:688.05px;top:421.00px;font-size:18.0px;color:#3b4148;transform:scaleX(1.0331);">Harvest Farm</span>
<span class="t" style="left:930.98px;top:421.00px;font-size:18.0px;color:#3b4148;transform:scaleX(1.0078);">HF:000001</span>
<span class="t" style="left:1102.13px;top:421.00px;font-size:18.0px;color:#3b4148;transform:scaleX(1.0298);">25.00 Kg</span>
<span class="t" style="left:1329.03px;top:423.00px;font-size:16.0px;color:#ffffff;transform:scaleX(1.0153);-webkit-text-stroke:0.3px #ffffff;">Expired</span>
<span class="t" style="left:1540.92px;top:408.00px;font-size:18.0px;color:#3b4148;transform:scaleX(1.0024);">Thu, 2:05PM</span>
<span class="t" style="left:1542.68px;top:434.00px;font-size:18.0px;color:#3b4148;transform:scaleX(1.0991);">31/07/2025</span>
<span class="t" style="left:1779.30px;top:423.00px;font-size:16.0px;color:#8a8a8a;transform:scaleX(1.0487);">Waitlist</span>
<span class="t" style="left:1979.93px;top:423.00px;font-size:16.0px;color:#ffffff;transform:scaleX(1.0300);-webkit-text-stroke:0.3px #ffffff;">Completed</span>
<span class="t" style="left:403.84px;top:507.00px;font-size:18.0px;color:#3b4148;transform:scaleX(1.0155);">Giving Hands</span>
<span class="t" style="left:688.05px;top:507.00px;font-size:18.0px;color:#3b4148;transform:scaleX(1.0331);">Harvest Farm</span>
<span class="t" style="left:930.98px;top:507.00px;font-size:18.0px;color:#3b4148;transform:scaleX(1.0078);">HF:000001</span>
<span class="t" style="left:1102.13px;top:507.00px;font-size:18.0px;color:#3b4148;transform:scaleX(1.0298);">25.00 Kg</span>
<span class="t" style="left:1324.23px;top:509.00px;font-size:16.0px;color:#ffffff;transform:scaleX(1.0131);-webkit-text-stroke:0.3px #ffffff;">Rejected</span>
<span class="t" style="left:1540.92px;top:495.00px;font-size:18.0px;color:#3b4148;transform:scaleX(1.0024);">Thu, 2:05PM</span>
<span class="t" style="left:1542.68px;top:521.00px;font-size:18.0px;color:#3b4148;transform:scaleX(1.0991);">31/07/2025</span>
<span class="t" style="left:1777.11px;top:509.00px;font-size:16.0px;color:#14b886;transform:scaleX(1.0305);">Primary</span>
<span class="t" style="left:1979.93px;top:509.00px;font-size:16.0px;color:#ffffff;transform:scaleX(1.0300);-webkit-text-stroke:0.3px #ffffff;">Completed</span>
<span class="t" style="left:403.84px;top:594.00px;font-size:18.0px;color:#3b4148;transform:scaleX(1.0155);">Giving Hands</span>
<span class="t" style="left:688.05px;top:594.00px;font-size:18.0px;color:#3b4148;transform:scaleX(1.0331);">Harvest Farm</span>
<span class="t" style="left:930.98px;top:594.00px;font-size:18.0px;color:#3b4148;transform:scaleX(1.0078);">HF:000001</span>
<span class="t" style="left:1101.97px;top:594.00px;font-size:18.0px;color:#3b4148;transform:scaleX(1.0911);">N/A</span>
<span class="t" style="left:1305.11px;top:596.00px;font-size:16.0px;color:#ffffff;transform:scaleX(1.0343);-webkit-text-stroke:0.3px #ffffff;">No availability</span>
<span class="t" style="left:1540.92px;top:581.00px;font-size:18.0px;color:#3b4148;transform:scaleX(1.0024);">Thu, 1:33PM</span>
<span class="t" style="left:1542.68px;top:607.00px;font-size:18.0px;color:#3b4148;transform:scaleX(1.0991);">31/07/2025</span>
<span class="t" style="left:1777.11px;top:596.00px;font-size:16.0px;color:#14b886;transform:scaleX(1.0305);">Primary</span>
<span class="t" style="left:1968.41px;top:596.00px;font-size:16.0px;color:#ffffff;transform:scaleX(1.0343);-webkit-text-stroke:0.3px #ffffff;">No availability</span>
<span class="t" style="left:403.84px;top:681.00px;font-size:18.0px;color:#3b4148;transform:scaleX(1.0155);">Giving Hands</span>
<span class="t" style="left:688.05px;top:681.00px;font-size:18.0px;color:#3b4148;transform:scaleX(1.0331);">Harvest Farm</span>
<span class="t" style="left:930.98px;top:681.00px;font-size:18.0px;color:#3b4148;transform:scaleX(1.0078);">HF:000001</span>
<span class="t" style="left:1102.13px;top:681.00px;font-size:18.0px;color:#3b4148;transform:scaleX(1.0298);">75.00 Kg</span>
<span class="t" style="left:1314.95px;top:683.00px;font-size:16.0px;color:#ffffff;transform:scaleX(1.0179);-webkit-text-stroke:0.3px #ffffff;">Transferred</span>
<span class="t" style="left:1540.92px;top:668.00px;font-size:18.0px;color:#3b4148;transform:scaleX(1.0024);">Thu, 1:32PM</span>
<span class="t" style="left:1542.68px;top:694.00px;font-size:18.0px;color:#3b4148;transform:scaleX(1.0991);">31/07/2025</span>
<span class="t" style="left:1777.11px;top:683.00px;font-size:16.0px;color:#14b886;transform:scaleX(1.0305);">Primary</span>
<span class="t" style="left:1979.93px;top:683.00px;font-size:16.0px;color:#ffffff;transform:scaleX(1.0300);-webkit-text-stroke:0.3px #ffffff;">Completed</span>
<span class="t" style="left:403.84px;top:767.00px;font-size:18.0px;color:#3b4148;transform:scaleX(1.0155);">Giving Hands</span>
<span class="t" style="left:688.05px;top:767.00px;font-size:18.0px;color:#3b4148;transform:scaleX(1.0331);">Harvest Farm</span>
<span class="t" style="left:930.98px;top:767.00px;font-size:18.0px;color:#3b4148;transform:scaleX(1.0078);">HF:000001</span>
<span class="t" style="left:1102.13px;top:767.00px;font-size:18.0px;color:#3b4148;transform:scaleX(1.0298);">25.00 Kg</span>
<span class="t" style="left:1302.01px;top:769.00px;font-size:16.0px;color:#ffffff;transform:scaleX(1.0339);-webkit-text-stroke:0.3px #ffffff;">Not responded</span>
<span class="t" style="left:1538.70px;top:754.00px;font-size:18.0px;color:#3b4148;transform:scaleX(0.9860);">Wed, 2:00PM</span>
<span class="t" style="left:1543.09px;top:780.00px;font-size:18.0px;color:#3b4148;transform:scaleX(1.0913);">30/07/2025</span>
<span class="t" style="left:1777.11px;top:769.00px;font-size:16.0px;color:#14b886;transform:scaleX(1.0305);">Primary</span>
<span class="t" style="left:1979.93px;top:769.00px;font-size:16.0px;color:#ffffff;transform:scaleX(1.0300);-webkit-text-stroke:0.3px #ffffff;">Completed</span>
<span class="t" style="left:403.84px;top:854.00px;font-size:18.0px;color:#3b4148;transform:scaleX(1.0155);">Giving Hands</span>
<span class="t" style="left:688.05px;top:854.00px;font-size:18.0px;color:#3b4148;transform:scaleX(1.0331);">Harvest Farm</span>
<span class="t" style="left:930.98px;top:854.00px;font-size:18.0px;color:#3b4148;transform:scaleX(1.0078);">HF:000001</span>
<span class="t" style="left:1102.13px;top:854.00px;font-size:18.0px;color:#3b4148;transform:scaleX(1.0298);">25.00 Kg</span>
<span class="t" style="left:1324.23px;top:856.00px;font-size:16.0px;color:#ffffff;transform:scaleX(1.0131);-webkit-text-stroke:0.3px #ffffff;">Rejected</span>
<span class="t" style="left:1538.70px;top:841.00px;font-size:18.0px;color:#3b4148;transform:scaleX(0.9860);">Wed, 2:00PM</span>
<span class="t" style="left:1543.09px;top:867.00px;font-size:18.0px;color:#3b4148;transform:scaleX(1.0913);">30/07/2025</span>
<span class="t" style="left:1777.11px;top:856.00px;font-size:16.0px;color:#14b886;transform:scaleX(1.0305);">Primary</span>
<span class="t" style="left:1979.93px;top:856.00px;font-size:16.0px;color:#ffffff;transform:scaleX(1.0300);-webkit-text-stroke:0.3px #ffffff;">Completed</span>
<span class="t" style="left:403.84px;top:940.00px;font-size:18.0px;color:#3b4148;transform:scaleX(1.0155);">Giving Hands</span>
<span class="t" style="left:688.05px;top:940.00px;font-size:18.0px;color:#3b4148;transform:scaleX(1.0331);">Harvest Farm</span>
<span class="t" style="left:930.98px;top:940.00px;font-size:18.0px;color:#3b4148;transform:scaleX(1.0078);">HF:000001</span>
<span class="t" style="left:1102.13px;top:940.00px;font-size:18.0px;color:#3b4148;transform:scaleX(1.0298);">25.00 Kg</span>
<span class="t" style="left:1314.95px;top:942.00px;font-size:16.0px;color:#ffffff;transform:scaleX(1.0179);-webkit-text-stroke:0.3px #ffffff;">Transferred</span>
<span class="t" style="left:1538.70px;top:928.00px;font-size:18.0px;color:#3b4148;transform:scaleX(0.9860);">Wed, 1:58PM</span>
<span class="t" style="left:1543.09px;top:954.00px;font-size:18.0px;color:#3b4148;transform:scaleX(1.0913);">30/07/2025</span>
<span class="t" style="left:1777.11px;top:942.00px;font-size:16.0px;color:#14b886;transform:scaleX(1.0305);">Primary</span>
<span class="t" style="left:1979.93px;top:942.00px;font-size:16.0px;color:#ffffff;transform:scaleX(1.0300);-webkit-text-stroke:0.3px #ffffff;">Completed</span>
<span class="t" style="left:1822.72px;top:1019.00px;font-size:16.0px;color:#3b4148;transform:scaleX(0.9693);-webkit-text-stroke:0.3px #3b4148;">Show</span>
<span class="t" style="left:1883.95px;top:1018.00px;font-size:16.0px;color:#555a60;transform:scaleX(1.0031);">20</span>
<span class="t" style="left:1958.68px;top:1019.00px;font-size:16.0px;color:#3b4148;transform:scaleX(1.0357);-webkit-text-stroke:0.3px #3b4148;">entries</span>
<span class="t" style="left:344.78px;top:1189.00px;font-size:12.0px;color:#825b89;transform:scaleX(1.0878);font-weight:700;">Foodiverse</span>
<span class="t" style="left:433.00px;top:1189.00px;font-size:12.0px;color:#9aa3be;transform:scaleX(1.1581);">© FoodCloud 2025</span>
<span class="t" style="left:1998.56px;top:1187.00px;font-size:15.5px;color:#3b4148;transform:scaleX(1.1077);">Info</span>
<span class="t" style="left:2061.24px;top:1187.00px;font-size:15.5px;color:#3b4148;transform:scaleX(1.0466);">Contact</span>
</div>
</body></html>
